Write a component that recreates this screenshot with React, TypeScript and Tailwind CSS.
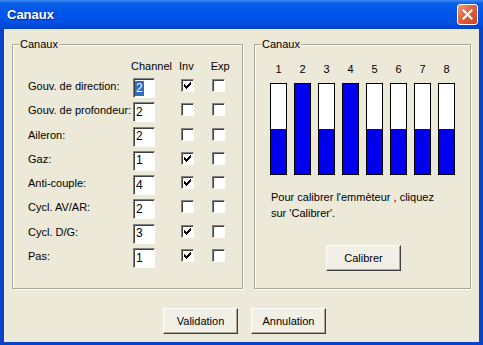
import React from 'react';

const rows = [
  { label: 'Gouv. de direction:', value: '2', inv: true, sel: true },
  { label: 'Gouv. de profondeur:', value: '2', inv: false },
  { label: 'Aileron:', value: '2', inv: false },
  { label: 'Gaz:', value: '1', inv: true },
  { label: 'Anti-couple:', value: '4', inv: true },
  { label: 'Cycl. AV/AR:', value: '2', inv: false },
  { label: 'Cycl. D/G:', value: '3', inv: true },
  { label: 'Pas:', value: '1', inv: true },
];

// percent of each bar that is filled
const bars = [50, 100, 50, 100, 50, 50, 50, 50];

function Check({ on }: { on: boolean }) {
  return (
    <span className="flex h-[13px] w-[13px] items-center justify-center border border-t-[#808080] border-l-[#808080] border-b-white border-r-white bg-white shadow-[inset_1px_1px_0_#404040]">
      {on && (
        <svg width="7" height="7" viewBox="0 0 7 7" shapeRendering="crispEdges">
          <path d="M0 2h1v3h-1zM1 3h1v3h-1zM2 4h1v3h-1zM3 3h1v3h-1zM4 2h1v3h-1zM5 1h1v3h-1zM6 0h1v3h-1z" fill="#000" />
        </svg>
      )}
    </span>
  );
}

function Btn({ children }: { children: React.ReactNode }) {
  return (
    <button
      type="button"
      className="flex h-[26px] w-[75px] items-center justify-center border border-t-white border-l-white border-b-[#404040] border-r-[#404040] bg-[#F1EFE6] text-[11px] text-black shadow-[inset_-1px_-1px_0_#ACA899]"
    >
      {children}
    </button>
  );
}

function Group({ className, children }: { className: string; children: React.ReactNode }) {
  return (
    <div className={`relative border border-[#ACA899] shadow-[inset_1px_1px_0_#fff,1px_1px_0_#fff] ${className}`}>
      <span className="absolute left-[6px] top-[-8px] bg-[#ECE9D8] px-[1px] text-[11px] leading-[14px]">Canaux</span>
      {children}
    </div>
  );
}

export default function App() {
  return (
    <div className="flex h-[345px] w-[483px] flex-col bg-[#0842C8] font-['Liberation_Sans',Arial,sans-serif] text-black">
      {/* Title bar */}
      <div className="flex h-[29px] items-center justify-between bg-[linear-gradient(to_bottom,#3C8CF8_0%,#0A5EE6_12%,#0055EA_45%,#0050E2_80%,#0040C8_100%)] pl-[7px] pr-[5px]">
        <span className="text-[13px] font-bold text-white [text-shadow:1px_1px_0_#0A2A8A]">Canaux</span>
        <span className="flex h-[21px] w-[21px] items-center justify-center rounded-[3px] border border-white bg-[linear-gradient(135deg,#EE9A7A_0%,#E2613C_45%,#C9431E_100%)]">
          <svg width="11" height="11" viewBox="0 0 11 11">
            <path d="M1.5 1.5L9.5 9.5M9.5 1.5L1.5 9.5" stroke="#fff" strokeWidth="2" strokeLinecap="square" />
          </svg>
        </span>
      </div>

      {/* Body */}
      <div className="mx-[4px] mb-[3px] flex flex-1 flex-col bg-[#ECE9D8] text-[11px]">
        <div className="mt-[15px] flex pl-[8px]">
          {/* Left group */}
          <Group className="h-[245px] w-[231px]">
            <div className="mt-[14px] flex h-[14px] items-center leading-[14px]">
              <span className="ml-[118px]">Channel</span>
              <span className="ml-[7px]">Inv</span>
              <span className="ml-[17px]">Exp</span>
            </div>
            <div className="mt-[5px] flex flex-col gap-[4.3px] pl-[15px]">
              {rows.map((r) => (
                <div key={r.label} className="flex h-[20px] items-start">
                  <span className="w-[105px] whitespace-nowrap pt-[1px] leading-[14px]">{r.label}</span>
                  <span className="flex h-[20px] w-[22px] items-center border border-t-[#808080] border-l-[#808080] border-b-white border-r-white bg-white pl-[1px] text-[12px] shadow-[inset_1px_1px_0_#404040]">
                    <span className={r.sel ? 'bg-[#316AC5] px-[1px] leading-[15px] text-white' : 'px-[1px] leading-[15px]'}>{r.value}</span>
                  </span>
                  <span className="ml-[26px] mt-[1px]"><Check on={r.inv} /></span>
                  <span className="ml-[18px] mt-[1px]"><Check on={false} /></span>
                </div>
              ))}
            </div>
          </Group>

          {/* Right group */}
          <Group className="ml-[11px] h-[245px] w-[217px]">
            <div className="mt-[17px] flex gap-[7px] pl-[15px]">
              {bars.map((b, i) => (
                <div key={i} className="flex w-[17px] flex-col items-center">
                  <span className="text-[11px] leading-[14px]">{i + 1}</span>
                  <div className="mt-[7px] flex h-[92px] w-[17px] flex-col justify-end border border-black bg-white">
                    <div className="w-full bg-[#0000F0]" style={{ height: `${b}%` }} />
                  </div>
                </div>
              ))}
            </div>
            <p className="ml-[16px] mt-[14px] leading-[16px]">
              Pour calibrer l'emmèteur , cliquez
              <br />
              sur 'Calibrer'.
            </p>
            <div className="ml-[71px] mt-[24px]">
              <Btn>Calibrer</Btn>
            </div>
          </Group>
        </div>

        <div className="ml-[159px] mt-[19px] flex gap-[13px]">
          <Btn>Validation</Btn>
          <Btn>Annulation</Btn>
        </div>
      </div>
    </div>
  );
}
